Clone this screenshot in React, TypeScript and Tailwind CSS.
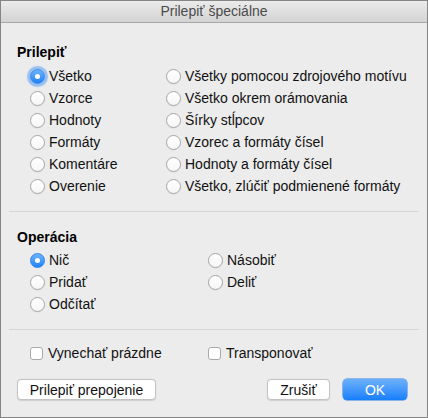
const pasteLeft = ["Všetko", "Vzorce", "Hodnoty", "Formáty", "Komentáre", "Overenie"];
const pasteRight = [
  "Všetky pomocou zdrojového motívu",
  "Všetko okrem orámovania",
  "Šírky stĺpcov",
  "Vzorec a formáty čísel",
  "Hodnoty a formáty čísel",
  "Všetko, zlúčiť podmienené formáty",
];

function Radio({ label, checked = false, focused = false }: { label: string; checked?: boolean; focused?: boolean }) {
  return (
    <div className="flex h-[22px] items-center gap-[4px]">
      {checked ? (
        <span
          className={
            "flex h-[15px] w-[15px] shrink-0 items-center justify-center rounded-full border border-[#2c84ec] bg-gradient-to-b from-[#6db3fb] to-[#1c82fb] " +
            (focused ? "shadow-[0_0_1px_3px_rgba(95,160,240,0.6)]" : "")
          }
        >
          <span className="h-[5px] w-[5px] rounded-full bg-white" />
        </span>
      ) : (
        <span className="h-[15px] w-[15px] shrink-0 rounded-full border border-[#a6a6a6] bg-gradient-to-b from-white to-[#f6f6f6] shadow-[0_0.5px_0.5px_rgba(0,0,0,0.08)]" />
      )}
      <span className="text-[14px] leading-none text-[#111]">{label}</span>
    </div>
  );
}

function Check({ label }: { label: string }) {
  return (
    <div className="flex h-[22px] items-center gap-[5px]">
      <span className="h-[13px] w-[13px] shrink-0 rounded-[3px] border border-[#a9a9a9] bg-white" />
      <span className="text-[14px] leading-none text-[#111]">{label}</span>
    </div>
  );
}

function Button({ children, primary = false, className = "" }: { children: React.ReactNode; primary?: boolean; className?: string }) {
  return (
    <button
      className={
        "flex h-[21px] items-center justify-center rounded-[4px] text-[14px] leading-none " +
        (primary
          ? "bg-gradient-to-b from-[#6bb1fb] to-[#127efa] text-white shadow-[0_0_0_0.5px_#2a7fe6] "
          : "border border-[#c3c3c3] bg-white text-[#111] shadow-[0_0.5px_1px_rgba(0,0,0,0.12)] ") +
        className
      }
    >
      {children}
    </button>
  );
}

export default function App() {
  return (
    <div
      className="flex h-[418px] w-[428px] flex-col border border-[#858585] bg-[#ececec]"
      style={{ fontFamily: '"Liberation Sans", Arial, sans-serif' }}
    >
      <div className="flex h-[22px] shrink-0 items-center justify-center border-b border-[#a8a8a8] bg-gradient-to-b from-[#ebebeb] to-[#d3d3d3]">
        <span className="text-[14px] text-[#4b4b4b]">Prilepiť špeciálne</span>
      </div>

      <div className="flex flex-col">
        <h2 className="mt-[21px] ml-[16px] text-[14px] leading-[16px] font-bold text-black">Prilepiť</h2>
        <div className="mt-[5px] ml-[29px] grid grid-cols-[136px_1fr]">
          <div className="flex flex-col">
            {pasteLeft.map((l, i) => (
              <Radio key={l} label={l} checked={i === 0} focused={i === 0} />
            ))}
          </div>
          <div className="flex flex-col">
            {pasteRight.map((l) => (
              <Radio key={l} label={l} />
            ))}
          </div>
        </div>

        <div className="mx-[8px] mt-[14px] h-px bg-[#d6d6d6]" />

        <h2 className="mt-[17px] ml-[16px] text-[14px] leading-[16px] font-bold text-black">Operácia</h2>
        <div className="mt-[4px] ml-[29px] grid grid-cols-[178px_1fr]">
          <div className="flex flex-col">
            <Radio label="Nič" checked />
            <Radio label="Pridať" />
            <Radio label="Odčítať" />
          </div>
          <div className="flex flex-col">
            <Radio label="Násobiť" />
            <Radio label="Deliť" />
          </div>
        </div>

        <div className="mx-[8px] mt-[14px] h-px bg-[#d6d6d6]" />

        <div className="mt-[12px] ml-[29px] grid grid-cols-[178px_1fr]">
          <Check label="Vynechať prázdne" />
          <Check label="Transponovať" />
        </div>

        <div className="mt-[15px] flex items-center pr-[20px] pl-[16px]">
          <Button className="w-[139px]">Prilepiť prepojenie</Button>
          <div className="flex-1" />
          <Button className="w-[63px]">Zrušiť</Button>
          <Button primary className="ml-[13px] w-[64px]">
            OK
          </Button>
        </div>
      </div>
    </div>
  );
}
